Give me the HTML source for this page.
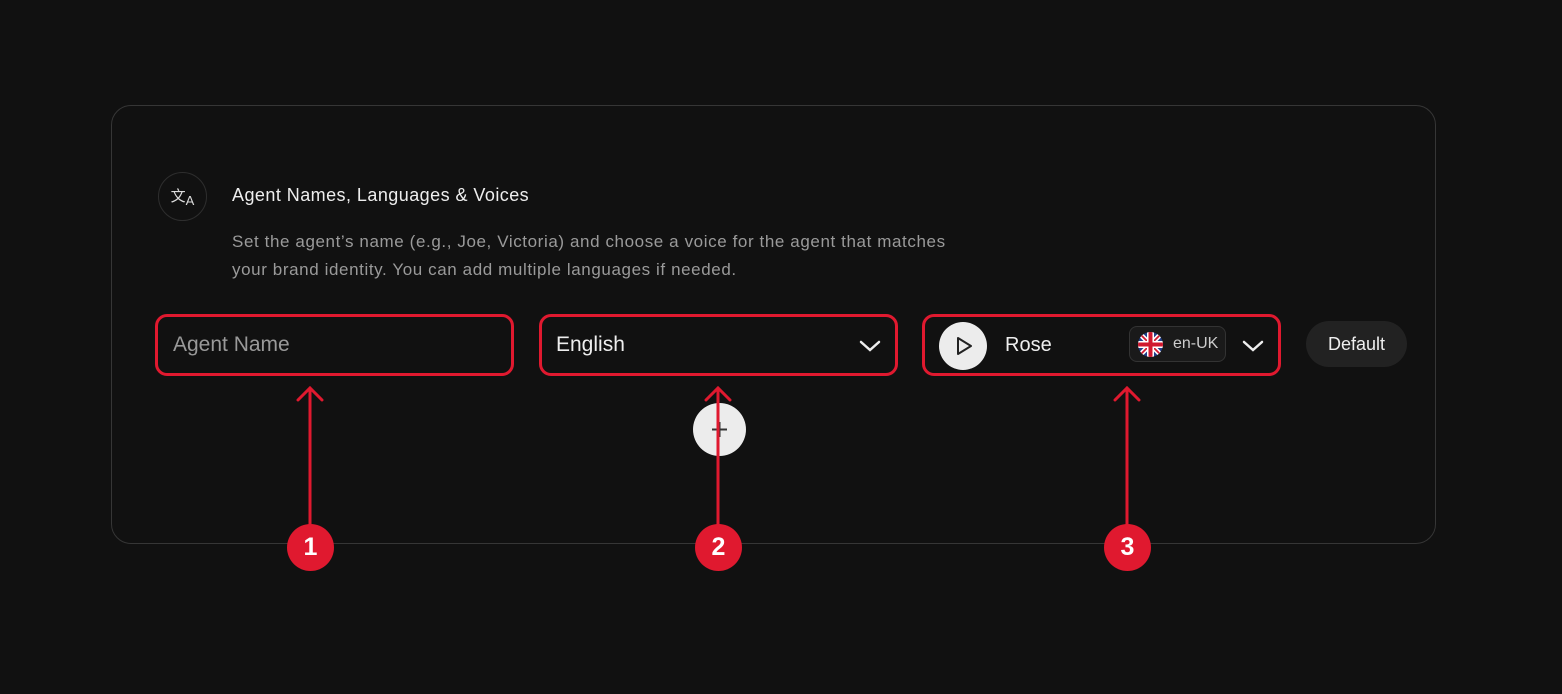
<!DOCTYPE html>
<html><head><meta charset="utf-8"><style>
*{box-sizing:border-box;margin:0;padding:0}
body{width:1562px;height:694px;background:#111;font-family:"Liberation Sans",sans-serif;position:relative;overflow:hidden}
.card{position:absolute;left:111px;top:105px;width:1325px;height:439px;border:1.5px solid #363636;border-radius:20px}
.ic{position:absolute;left:158px;top:172px;width:49px;height:49px;border:1.5px solid #2e2e2e;border-radius:50%;color:#ddd;font-size:15px;display:flex;align-items:center;justify-content:center}
.title{position:absolute;left:232px;top:185px;color:#eee;font-size:18px;letter-spacing:.45px}
.desc{position:absolute;left:232px;top:228px;color:#9a9a9a;font-size:17px;line-height:28px;letter-spacing:.6px}
.box{position:absolute;top:314px;height:62px;border:3px solid #e0192f;border-radius:12px;width:359px;color:#eee;font-size:21px;display:flex;align-items:center}
.def{position:absolute;left:1306px;top:321px;width:101px;height:46px;border-radius:23px;background:#222;color:#eee;font-size:18px;display:flex;align-items:center;justify-content:center}
.plus{position:absolute;left:693px;top:403px;width:53px;height:53px;border-radius:50%;background:#ececec}
.num{position:absolute;width:47px;height:47px;border-radius:50%;background:#e0192f;color:#fff;font-weight:bold;font-size:25px;display:flex;align-items:center;justify-content:center;top:524px}
</style></head><body>
<div class="card"></div>
<div class="ic"><span>文<sub style="font-size:13px">A</sub></span></div>
<div class="title">Agent Names, Languages &amp; Voices</div>
<div class="desc">Set the agent’s name (e.g., Joe, Victoria) and choose a voice for the agent that matches<br>your brand identity. You can add multiple languages if needed.</div>
<div class="box" style="left:155px;padding-left:15px;color:#999">Agent Name</div>
<div class="box" style="left:539px;padding-left:14px">English
<svg style="position:absolute;right:14px;top:22px" width="22" height="14" viewBox="0 0 22 14"><path d="M2 3l9 8 9-8" fill="none" stroke="#eee" stroke-width="2.5" stroke-linecap="round"/></svg></div>
<div class="box" style="left:922px">
<div style="position:absolute;left:14px;top:5px;width:48px;height:48px;border-radius:50%;background:#ececec"><svg width="48" height="48"><path d="M19 16v16l13-8z" fill="none" stroke="#222" stroke-width="2" stroke-linejoin="round"/></svg></div>
<span style="position:absolute;left:80px;font-size:20px">Rose</span>
<div style="position:absolute;left:204px;top:9px;width:97px;height:36px;border:1.5px solid #333;border-radius:8px;background:#1a1a1a">
<svg style="position:absolute;left:8px;top:5px" width="25" height="25" viewBox="0 0 25 25"><clipPath id="c"><circle cx="12.5" cy="12.5" r="12.5"/></clipPath><g clip-path="url(#c)"><rect width="25" height="25" fill="#1f3e8a"/><path d="M0 0L25 25M25 0L0 25" stroke="#fff" stroke-width="5"/><path d="M0 0L25 25M25 0L0 25" stroke="#d0182f" stroke-width="1.8"/><path d="M12.5 0v25M0 12.5h25" stroke="#fff" stroke-width="7"/><path d="M12.5 0v25M0 12.5h25" stroke="#d0182f" stroke-width="4"/></g></svg>
<span style="position:absolute;left:43px;top:8px;font-size:16px;color:#ccc">en-UK</span></div>
<svg style="position:absolute;right:14px;top:22px" width="22" height="14" viewBox="0 0 22 14"><path d="M2 3l9 8 9-8" fill="none" stroke="#eee" stroke-width="2.5" stroke-linecap="round"/></svg></div>
<div class="def">Default</div>
<div class="plus"><svg width="53" height="53"><path d="M19 26.5h15M26.5 19v15" stroke="#333" stroke-width="2"/></svg></div>
<svg style="position:absolute;left:0;top:0" width="1562" height="694">
<g stroke="#e0192f" stroke-width="3" fill="none" stroke-linecap="round">
<path d="M310 388V530M298 400l12-12 12 12"/>
<path d="M718 388V530M706 400l12-12 12 12"/>
<path d="M1127 388V530M1115 400l12-12 12 12"/>
</g></svg>
<div class="num" style="left:287px">1</div>
<div class="num" style="left:695px">2</div>
<div class="num" style="left:1104px">3</div>
</body></html>
